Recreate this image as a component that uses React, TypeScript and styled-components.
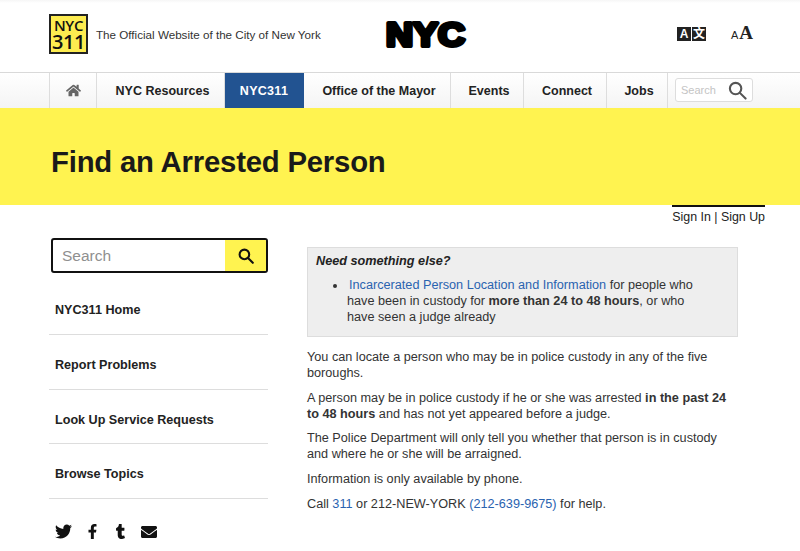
import React from "react";
import styled, { createGlobalStyle } from "styled-components";
import { FaTwitter, FaFacebookF, FaTumblr, FaEnvelope, FaHome } from "react-icons/fa";

const navItems = [
  { label: "NYC Resources", width: 128 },
  { label: "NYC311", width: 79, active: true },
  { label: "Office of the Mayor", width: 147 },
  { label: "Events", width: 73 },
  { label: "Connect", width: 83 },
  { label: "Jobs", width: 61 },
];

const sideLinks = ["NYC311 Home", "Report Problems", "Look Up Service Requests", "Browse Topics"];

function SearchGlyph({ size, weight }: { size: number; weight: number }) {
  return (
    <svg width={size} height={size} viewBox="0 0 20 20" fill="none" stroke="currentColor" strokeWidth={weight}>
      <circle cx="8" cy="8" r="6" />
      <path d="M12.5 12.5L18.5 18.5" strokeLinecap="round" />
    </svg>
  );
}

function CityLogo() {
  return (
    <CitySvg width="83" height="40" viewBox="0 0 83 40">
      <text
        x="2"
        y="32"
        textLength="79"
        lengthAdjust="spacingAndGlyphs"
        fontFamily="Liberation Sans, sans-serif"
        fontWeight="700"
        fontSize="33"
        stroke="#000"
        strokeWidth="4"
        strokeLinejoin="round"
      >
        NYC
      </text>
    </CitySvg>
  );
}

export default function App() {
  return (
    <Page>
      <GlobalStyle />
      <Header>
        <Brand>
          <LogoBox>
            <LogoLine>NYC</LogoLine>
            <LogoLine $big>311</LogoLine>
          </LogoBox>
          <Tagline>The Official Website of the City of New York</Tagline>
        </Brand>
        <CityLogo />
        <Tools>
          <Translate>
            <TranslateKey>A</TranslateKey>
            <TranslateKey>文</TranslateKey>
          </Translate>
          <TextSize>
            <small>A</small>A
          </TextSize>
        </Tools>
      </Header>
      <NavBar>
        <NavHome>
          <FaHome size={15} />
        </NavHome>
        {navItems.map((item) => (
          <NavItem key={item.label} $width={item.width} $active={item.active}>
            {item.label}
          </NavItem>
        ))}
        <NavSearch>
          <span>Search</span>
          <SearchGlyph size={19} weight={2.2} />
        </NavSearch>
      </NavBar>
      <Banner>
        <Title>Find an Arrested Person</Title>
      </Banner>
      <AccountRow>
        <Account>Sign In | Sign Up</Account>
      </AccountRow>
      <Columns>
        <Sidebar>
          <SideSearch>
            <SideSearchText>Search</SideSearchText>
            <SideSearchButton>
              <SearchGlyph size={16} weight={2.6} />
            </SideSearchButton>
          </SideSearch>
          <SideList>
            {sideLinks.map((link) => (
              <SideLink key={link}>{link}</SideLink>
            ))}
          </SideList>
          <Social>
            <FaTwitter size={17} />
            <FaFacebookF size={15} />
            <FaTumblr size={15} />
            <FaEnvelope size={16} />
          </Social>
        </Sidebar>
        <Main>
          <Callout>
            <CalloutTitle>Need something else?</CalloutTitle>
            <CalloutList>
              <li>
                <Link>Incarcerated Person Location and Information</Link> for people who have been in
                custody for <strong>more than 24 to 48 hours</strong>, or who have seen a judge already
              </li>
            </CalloutList>
          </Callout>
          <Para>You can locate a person who may be in police custody in any of the five boroughs.</Para>
          <Para>
            A person may be in police custody if he or she was arrested{" "}
            <strong>in the past 24 to 48 hours</strong> and has not yet appeared before a judge.
          </Para>
          <Para>
            The Police Department will only tell you whether that person is in custody and where he or she
            will be arraigned.
          </Para>
          <Para>Information is only available by phone.</Para>
          <Para>
            Call <Link>311</Link> or 212-NEW-YORK <Link>(212-639-9675)</Link> for help.
          </Para>
        </Main>
      </Columns>
    </Page>
  );
}

const GlobalStyle = createGlobalStyle`
  html, body {
    margin: 0;
    padding: 0;
    background: #fff;
    overflow: hidden;
  }
  body {
    font-family: "Liberation Sans", Arial, sans-serif;
    color: #222;
  }
`;

const Page = styled.div`
  width: 800px;
  height: 551px;
  overflow: hidden;
`;

const Header = styled.header`
  height: 72px;
  padding: 0 0 0 49px;
  display: flex;
  align-items: center;
  box-sizing: border-box;
  background: linear-gradient(#f6f6f6 0, #fff 3px);
`;

const Brand = styled.div`
  display: flex;
  align-items: center;
  gap: 8px;
  width: 335px;
  margin-top: -4px;
`;

const LogoBox = styled.div`
  width: 39px;
  height: 40px;
  box-sizing: border-box;
  background: #fdec50;
  border: 2px solid #222;
  display: flex;
  flex-direction: column;
  align-items: center;
  justify-content: center;
  font-family: "Open Sans", sans-serif;
  font-weight: 600;
  color: #111;
`;

const LogoLine = styled.span<{ $big?: boolean }>`
  font-size: ${({ $big }) => ($big ? 20 : 15)}px;
  line-height: ${({ $big }) => ($big ? 18 : 15)}px;
  letter-spacing: ${({ $big }) => ($big ? -0.5 : -0.3)}px;
`;

const Tagline = styled.div`
  font-size: 11.65px;
  margin-top: 1px;
  color: #333;
  white-space: nowrap;
`;

const CitySvg = styled.svg`
  flex: none;
  margin-top: -4px;
  display: block;
`;

const Tools = styled.div`
  display: flex;
  align-items: center;
  margin-left: 210px;
  margin-top: -4px;
`;

const Translate = styled.div`
  display: flex;
  gap: 1px;
  width: 46px;
`;

const TranslateKey = styled.span`
  width: 14px;
  height: 14px;
  background: #222;
  color: #fff;
  font-size: 12px;
  line-height: 14px;
  font-weight: 700;
  text-align: center;
  font-family: "Liberation Sans", "Noto Sans CJK SC", sans-serif;
`;

const TextSize = styled.div`
  margin-left: 8px;
  font-family: "Liberation Serif", serif;
  font-size: 19px;
  line-height: 20px;
  font-weight: 700;
  color: #222;

  small {
    font-family: "Liberation Sans", sans-serif;
    font-size: 11px;
    font-weight: 400;
    margin-right: 1px;
  }
`;

const NavBar = styled.nav`
  height: 36px;
  box-sizing: border-box;
  border-top: 1px solid #d9d9d9;
  padding-left: 49px;
  display: flex;
  background: linear-gradient(#fff 0, #f4f4f4 100%);
`;

const NavHome = styled.div`
  width: 48px;
  box-sizing: border-box;
  padding-left: 1px;
  border-left: 1px solid #ddd;
  border-right: 1px solid #ddd;
  display: flex;
  align-items: center;
  justify-content: center;
  color: #666;
`;

const NavItem = styled.div<{ $width: number; $active?: boolean }>`
  width: ${({ $width }) => $width}px;
  box-sizing: border-box;
  padding-left: ${({ $active }) => ($active ? 0 : 4)}px;
  display: flex;
  align-items: center;
  justify-content: center;
  border-right: 1px solid ${({ $active }) => ($active ? "#225391" : "#ddd")};
  font-size: 12.5px;
  font-weight: 700;
  letter-spacing: ${({ $active }) => ($active ? 0.3 : 0)}px;
  color: ${({ $active }) => ($active ? "#fff" : "#222")};
  background: ${({ $active }) => ($active ? "#225391" : "transparent")};
`;

const NavSearch = styled.div`
  width: 78px;
  height: 24px;
  box-sizing: border-box;
  margin: 5px 0 0 7px;
  padding: 0 5px;
  border: 1px solid #ddd;
  border-radius: 3px;
  background: #fff;
  display: flex;
  align-items: center;
  justify-content: space-between;
  font-size: 11px;
  color: #c4c4c4;

  svg {
    color: #555;
  }
`;

const Banner = styled.div`
  height: 97px;
  box-sizing: border-box;
  padding: 11px 0 0 51px;
  background: #fff350;
  display: flex;
  align-items: center;
`;

const Title = styled.h1`
  margin: 0;
  font-size: 29.3px;
  font-weight: 700;
  letter-spacing: -0.2px;
  color: #1a1a1a;
`;

const AccountRow = styled.div`
  display: flex;
  justify-content: flex-end;
  padding-right: 35px;
`;

const Account = styled.div`
  border-top: 2px solid #111;
  padding-top: 3px;
  font-size: 12.4px;
  line-height: 14px;
  color: #222;
  white-space: nowrap;
`;

const Columns = styled.div`
  display: flex;
  padding: 14px 0 0 49px;
`;

const Sidebar = styled.aside`
  width: 219px;
  flex: none;
`;

const SideSearch = styled.div`
  margin-left: 2px;
  width: 217px;
  height: 35px;
  box-sizing: border-box;
  border: 2px solid #111;
  border-radius: 3px;
  display: flex;
  overflow: hidden;
`;

const SideSearchText = styled.div`
  flex: 1;
  padding-left: 9px;
  font-size: 15.5px;
  line-height: 31px;
  color: #8f8f8f;
`;

const SideSearchButton = styled.div`
  width: 41px;
  background: #fff350;
  color: #111;
  display: flex;
  align-items: center;
  justify-content: center;
`;

const SideList = styled.div`
  margin-top: 7px;
`;

const SideLink = styled.div`
  height: 54.8px;
  box-sizing: border-box;
  border-bottom: 1px solid #ddd;
  padding: 23px 0 0 6px;
  font-size: 12.6px;
  line-height: 15px;
  font-weight: 700;
  color: #222;
`;

const Social = styled.div`
  display: flex;
  align-items: center;
  gap: 13px;
  padding: 24px 0 0 6px;
  color: #111;
`;

const Main = styled.main`
  width: 431px;
  margin-left: 39px;
  padding-top: 9px;
  font-size: 12.68px;
  line-height: 16px;
  color: #333;
`;

const Callout = styled.div`
  height: 90px;
  box-sizing: border-box;
  padding: 5px 8px;
  margin-bottom: 12px;
  background: #eee;
  border: 1px solid #ddd;
`;

const CalloutTitle = styled.div`
  font-weight: 700;
  font-style: italic;
  color: #222;
  margin-bottom: 8px;
`;

const CalloutList = styled.ul`
  margin: 0;
  padding: 0 30px 0 31px;

  li {
    text-indent: 2px;
  }
`;

const Link = styled.span`
  color: #2a63b0;
`;

const Para = styled.p`
  margin: 0 0 8.7px;
  padding-right: 10px;
`;
